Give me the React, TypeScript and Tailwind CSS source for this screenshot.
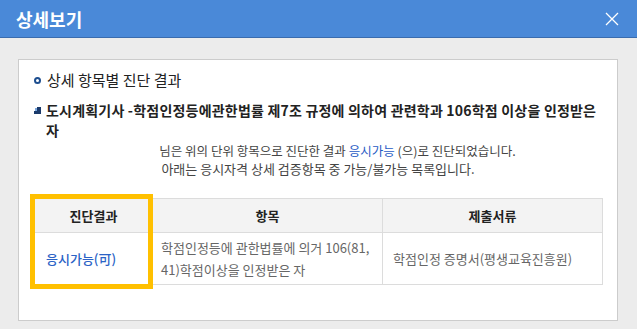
import React from "react";

const font = { fontFamily: '"Noto Sans CJK KR", "Noto Sans", sans-serif' };

export default function App() {
  return (
    <div style={font} className="w-[637px] h-[329px] bg-[#ececec] overflow-hidden">
      <div className="h-[38px] bg-[#4a89d8] border-b border-[#3a6cae] flex items-center justify-between pl-[16px] pr-[18px]">
        <span className="text-white text-[18px] font-bold leading-none">상세보기</span>
        <svg width="14" height="14" viewBox="0 0 14 14">
          <path d="M1 1 L13 13 M13 1 L1 13" stroke="#fff" strokeWidth="1.3" />
        </svg>
      </div>
      <div className="mt-[21px] ml-[18px] w-[600px] h-[262px] bg-white border border-[#cccccc] px-[15px] pt-[10px]">
        <div className="flex items-center h-[20px] text-[15px] text-[#222]">
          <span className="w-[7px] h-[7px] rounded-full border-2 border-[#1d4e8f] mr-[6px] ml-0"></span>
          <span>상세 항목별 진단 결과</span>
        </div>
        <div className="mt-[10px] flex text-[14px] tracking-[0.2px] font-bold leading-[20px] text-[#222]">
          <svg width="7" height="7" viewBox="0 0 7 7" className="mt-[7px] mr-[5px] shrink-0">
            <rect x="0" y="0" width="7" height="7" fill="#1b3a6b" />
            <rect x="0" y="0" width="3" height="4" fill="#ffffff" />
            <rect x="1" y="1" width="2" height="3" fill="#7aa6dc" />
          </svg>
          <div className="whitespace-nowrap">
            도시계획기사 -학점인정등에관한법률 제7조 규정에 의하여 관련학과 106학점 이상을 인정받은
            <br />자
          </div>
        </div>
        <div className="mt-[2px] text-center leading-[18px] text-[#444]">
          <div className="pl-[39px] text-[12.5px]">
            님은 위의 단위 항목으로 진단한 결과 <span className="text-[#1f5bc4]">응시가능</span> (으)로 진단되었습니다.
          </div>
          <div className="text-[13px]">아래는 응시자격 상세 검증항목 중 가능/불가능 목록입니다.</div>
        </div>
        <div className="relative mt-[20px] w-[568px]">
          <table className="w-[568px] border-collapse table-fixed">
            <colgroup>
              <col className="w-[118px]" />
              <col className="w-[230px]" />
              <col className="w-[220px]" />
            </colgroup>
            <thead>
              <tr className="h-[34px] bg-[#f3f3f3]">
                <th className="border border-[#dcdcdc] text-[13px] font-bold text-[#222]">진단결과</th>
                <th className="border border-[#dcdcdc] text-[13px] font-bold text-[#222]">항목</th>
                <th className="border border-[#dcdcdc] text-[13px] font-bold text-[#222]">제출서류</th>
              </tr>
            </thead>
            <tbody>
              <tr className="h-[52px]">
                <td className="border border-[#dcdcdc] pl-[11px] text-[13px] font-medium text-[#2b63c6]">응시가능(可)</td>
                <td className="border border-[#dcdcdc] pl-[8px] pr-[2px] text-[13px] leading-[22px] text-[#666] whitespace-nowrap">
                  학점인정등에 관한법률에 의거 106(81,
                  <br />
                  41)학점이상을 인정받은 자
                </td>
                <td className="border border-[#dcdcdc] pl-[10px] text-[13px] text-[#666]">학점인정 증명서(평생교육진흥원)</td>
              </tr>
            </tbody>
          </table>
          <div className="absolute left-[-4px] top-[-4px] w-[123px] h-[95px] border-[5px] border-[#ffc000]"></div>
        </div>
      </div>
    </div>
  );
}
